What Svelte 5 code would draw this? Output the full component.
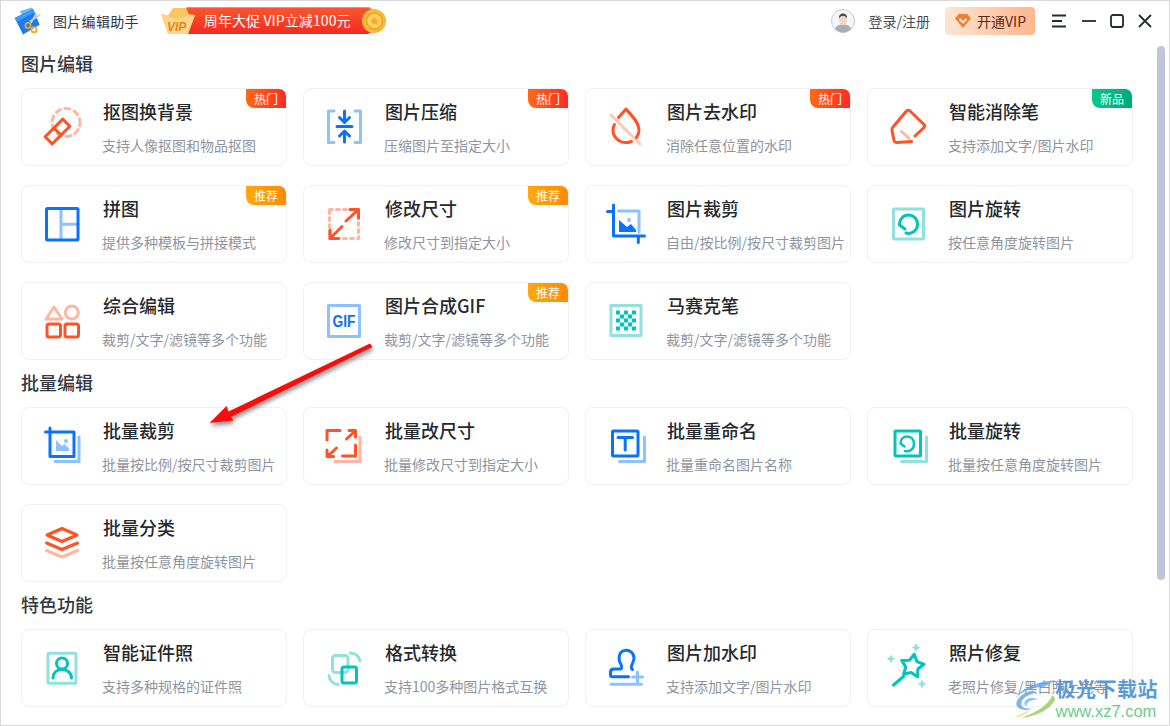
<script>
	const sections = [
		{
			name: '图片编辑',
			items: [
				{ icon: 'eraser', title: '抠图换背景', sub: '支持人像抠图和物品抠图', badge: 'hot' },
				{ icon: 'compress', title: '图片压缩', sub: '压缩图片至指定大小', badge: 'hot' },
				{ icon: 'drop', title: '图片去水印', sub: '消除任意位置的水印', badge: 'hot' },
				{ icon: 'pen', title: '智能消除笔', sub: '支持添加文字/图片水印', badge: 'new' },
				{ icon: 'grid', title: '拼图', sub: '提供多种模板与拼接模式', badge: 'rec' },
				{ icon: 'resize', title: '修改尺寸', sub: '修改尺寸到指定大小', badge: 'rec' },
				{ icon: 'crop', title: '图片裁剪', sub: '自由/按比例/按尺寸裁剪图片' },
				{ icon: 'rotate', title: '图片旋转', sub: '按任意角度旋转图片' },
				{ icon: 'shapes', title: '综合编辑', sub: '裁剪/文字/滤镜等多个功能' },
				{ icon: 'gif', title: '图片合成GIF', sub: '裁剪/文字/滤镜等多个功能', badge: 'rec' },
				{ icon: 'mosaic', title: '马赛克笔', sub: '裁剪/文字/滤镜等多个功能' }
			]
		},
		{
			name: '批量编辑',
			items: [
				{ icon: 'bcrop', title: '批量裁剪', sub: '批量按比例/按尺寸裁剪图片' },
				{ icon: 'bresize', title: '批量改尺寸', sub: '批量修改尺寸到指定大小' },
				{ icon: 'brename', title: '批量重命名', sub: '批量重命名图片名称' },
				{ icon: 'brotate', title: '批量旋转', sub: '批量按任意角度旋转图片' },
				{ icon: 'layers', title: '批量分类', sub: '批量按任意角度旋转图片' }
			]
		},
		{
			name: '特色功能',
			items: [
				{ icon: 'idphoto', title: '智能证件照', sub: '支持多种规格的证件照' },
				{ icon: 'convert', title: '格式转换', sub: '支持100多种图片格式互换' },
				{ icon: 'stamp', title: '图片加水印', sub: '支持添加文字/图片水印' },
				{ icon: 'wand', title: '照片修复', sub: '老照片修复/黑白照上色等' }
			]
		}
	];

	const badgeText = { hot: '热门', rec: '推荐', new: '新品' };

	const mosaicCells = [];
	for (let r = 0; r < 5; r++) {
		for (let c = 0; c < 5; c++) {
			if ((r + c) % 2 === 0) mosaicCells.push({ x: 10 + c * 4, y: 10.5 + r * 4 });
		}
	}
</script>

{#snippet icon(name)}
	<svg class="icon" viewBox="0 0 40 40" width="40" height="40">
		{#if name === 'eraser'}
			<circle class="ol" cx="24" cy="16.5" r="14" stroke-dasharray="5 4.5" stroke-dashoffset="2" />
			<g transform="rotate(-45 15.5 25.5)">
				<rect class="o" x="3" y="20.5" width="25" height="10" />
				<path class="o" d="M15.5 20.5v10" />
			</g>
		{:else if name === 'compress'}
			<path class="bl" d="M10 5H4.5v31.5H10M31 5h5.5v31.5H31" />
			<path class="b" d="M13 20.5h15M20.5 5v11M15.5 11.5l5 5 5-5M20.5 36V25.5M15.5 30l5-5 5 5" />
		{:else if name === 'drop'}
			<path class="ol2" d="M5 9l29 29" />
			<path class="o" d="M12.5 11.5L20 3c4 5.5 13 12 13 21 0 3-1 5.5-2.5 7.5M25.5 35.5C16 39 7 33 7 24c0-2 .5-4 1.5-5.5" />
		{:else if name === 'pen'}
			<path class="o" d="M27 30l9-8.500q1.500-1.500 0-3L22 5q-2-1.500-3.500 0L5 21q-1.500 1.500-1 3.500l2 10q.5 2 2.500 1.900L23.500 35.500" />
			<path class="ol" d="M13.5 25.5l7.5 6.800" />
		{:else if name === 'grid'}
			<path class="bl" d="M19 5.500v31M19 21.300h17" />
			<rect class="b" x="4.500" y="5.500" width="31.500" height="31.500" rx="1" />
		{:else if name === 'resize'}
			<rect class="ol" x="5.500" y="6.500" width="29" height="29" stroke-dasharray="3 4" />
			<path class="o" d="M22 18L34.500 6.500M26 6.500h8.500V15M18 23.500L6 35.500M6 27v8.500h8.500" />
		{:else if name === 'crop'}
			<path class="bl" d="M12.500 8H33v21" />
			<path class="b" d="M1.500 8.500h6M7.500 2v31h31M32.300 33v6.500" />
			<path class="fb" d="M13 17l8 7 4-3 5 6v2H13z" />
			<circle class="fbl" cx="23" cy="17" r="2" />
		{:else if name === 'rotate'}
			<rect class="tl" x="5.500" y="6" width="30" height="30" rx="1" />
			<path class="t" d="M18 30c5 1.500 11.500-2 11.500-8.500S25 12 20.500 12c-5 0-9 4-9 9.500M11.500 22l5.500 4" />
		{:else if name === 'shapes'}
			<path class="ol" d="M12 7l8 12H4z" />
			<circle class="ol" cx="29.800" cy="12.500" r="6.500" />
			<rect class="o" x="5" y="24" width="13.500" height="13" rx="2" />
			<rect class="o" x="23" y="24" width="13.500" height="13" rx="2" />
		{:else if name === 'gif'}
			<rect class="bl" x="4.500" y="5.500" width="31" height="31" />
			<text class="gif" x="20" y="26.500" text-anchor="middle" textLength="23" lengthAdjust="spacingAndGlyphs">GIF</text>
		{:else if name === 'mosaic'}
			<rect class="tl" x="5" y="5.500" width="30" height="30" />
			{#each mosaicCells as cell}
				<rect class="ft" x={cell.x} y={cell.y} width="4" height="4" />
			{/each}
		{:else if name === 'bcrop'}
			<path class="bl" d="M37 12v24.500H13" />
			<path class="b" d="M3.500 7H32v24.500H8V3" />
			<path class="fbl" d="M14 15l6 6 2.500-2 4.500 4.500V26H14z" />
			<circle class="fbl" cx="24" cy="16" r="2" />
		{:else if name === 'bresize'}
			<path class="ol" d="M36 12v24.500H11" />
			<path class="o" d="M3 15V5.500h13M31.500 20v11H18.500M22.500 14L31 6M25 5.500h6.500V12M4 31L12.500 23M3 25v6.500h6.500" />
		{:else if name === 'brename'}
			<path class="bl" d="M38.500 12v24.500H13.500" />
			<rect class="b" x="6.500" y="6" width="25.500" height="25" rx="1" />
			<path class="b" d="M12 12.500h14.500M19.200 12.500V25" />
		{:else if name === 'brotate'}
			<path class="tl" d="M38.500 12v24.500H13.500" />
			<rect class="t" x="7" y="6" width="25.500" height="25" rx="1" />
			<path class="t thin" d="M17 26c4 1 9-1.500 9-7s-3.500-7.500-7-7.500c-4 0-6.500 3-6.500 7M12.500 18.500l4 3" />
		{:else if name === 'layers'}
			<path class="o" d="M20 6.500L35 13 20 19.500 5 13z" />
			<path class="o" d="M4.500 21L20 27.500 35.500 21" />
			<path class="ol" d="M4.500 28.500L20 35l15.500-6.500" />
		{:else if name === 'idphoto'}
			<rect class="tl" x="6" y="6.200" width="28" height="30" rx="1" />
			<circle class="t" cx="20" cy="16.500" r="5.500" />
			<path class="t" d="M11 31c0-5 3.500-8.500 9-8.500s9.500 3.500 9.500 8.500" />
		{:else if name === 'convert'}
			<rect class="tl" x="8.500" y="8.500" width="15.500" height="17" rx="3" />
			<rect class="t" x="18" y="20" width="14.500" height="16" rx="2" />
			<path class="tl" d="M26.500 6c5 .3 8.800 3.500 9.500 8M5 28.500c.5 5 4 8.500 9 9" />
		{:else if name === 'stamp'}
			<path class="b" d="M22.500 29.700H6.500c-1.300 0-2-.7-2-2V25c0-2 1.500-3 3.500-3h6c2 0 2-2 1-4.500C13.500 15 13 13.500 13 11.300 13 6 16 3.200 20 3.200s8 2.800 8 8.100c0 2.200-1 3.700-2 6.200-1 2.500-1 4.500.5 5" />
			<path class="bl" d="M5 37.300h30.500M31.500 25v10M26.500 30h10" />
		{:else if name === 'wand'}
			<path class="t" d="M26.300 7.200L28.900 14.500 36.100 17.300 29.900 22 29.500 29.800 23.100 25.400 15.600 27.300 17.800 19.900 13.600 13.400 21.400 13.200z" />
			<path class="t" d="M15.500 29.500L5.500 38" />
			<path class="ftl" d="M28 -4l1.500 3 3 1.500-3 1.500-1.500 3-1.500-3-3-1.500 3-1.500zM3 7.500l1.500 2.800 2.800 1.500-2.800 1.500L3 16.200l-1.500-2.900L-1.300 11.800l2.800-1.500zM34 32.500l1.500 3 2.800 1.500-2.800 1.500L34 41.500l-1.500-3-2.800-1.500 2.800-1.500z" />
		{/if}
	</svg>
{/snippet}

<div class="window">
	<header class="titlebar">
		<svg class="logo" viewBox="0 0 30 30" width="30" height="30">
			<path d="M8 5L20 1.500l5 8.500-13 5z" fill="#6cc0f8" />
			<path d="M2.700 12L21 3l6.700 15.800L11 28.500z" fill="#1a7cf0" />
			<path d="M2.700 12L21 3l1.500 3.500L5 15.500z" fill="#3f9bf5" />
			<path d="M17.700 15.500L28.300 8.800M19 17L24.300 7.200" stroke="#c9ccd4" stroke-width="1.600" fill="none" />
			<circle cx="16" cy="19.500" r="2.600" fill="none" stroke="#f5a623" stroke-width="1.800" />
			<circle cx="22" cy="23.800" r="2.600" fill="none" stroke="#f5a623" stroke-width="1.800" />
		</svg>
		<span class="appname">图片编辑助手</span>

		<div class="promo">
			<span class="promo-pill">周年大促 VIP立减100元</span>
			<svg class="ingot" viewBox="0 0 34 28" width="34" height="28">
				<path d="M0 7l7 1.500L12 1h13l3 6.500L34 8l-7 19H7z" fill="#fbc65f" />
				<path d="M0 7l7 1.500c4 4 15 4 21-1L34 8l-7 19H7z" fill="#fcd588" />
				<text x="6" y="23.500" class="vip-mark">VIP</text>
			</svg>
			<svg class="coin" viewBox="0 0 26 26" width="26" height="26">
				<circle cx="13" cy="13" r="12" fill="#f6b93b" />
				<circle cx="13.500" cy="13" r="8" fill="#fbd15f" stroke="#eea21d" stroke-width="1.500" />
				<path d="M13.500 8.500l1.500 3 3 .4-2.200 2.100.6 3-2.900-1.500-2.900 1.500.6-3-2.200-2.100 3-.4z" fill="#f3ad2c" />
			</svg>
		</div>

		<div class="account">
			<svg class="avatar" viewBox="0 0 24 24" width="24" height="24">
				<circle cx="12" cy="12" r="11.500" fill="#f5f6f8" stroke="#c4c8ce" />
				<path d="M4 20c1-3.500 4-4.500 8-4.500s7 1 8 4.500a11 11 0 0 1-16 0z" fill="#a9afb8" />
				<ellipse cx="12" cy="10.500" rx="4" ry="5.500" fill="#f2d6c4" />
				<path d="M8 9.500C7.500 6 9.500 4.500 12 4.500s4.500 1.500 4 5c-1-2-2.500-2.500-4-2.500s-3 .5-4 2.500z" fill="#4a4f57" />
			</svg>
			<span class="login">登录/注册</span>
		</div>

		<div class="vip-btn">
			<svg viewBox="0 0 18 16" width="18" height="16">
				<path d="M4.500 1h9L17 5.500 9 15 1 5.500z" fill="#e5843a" />
				<path d="M5.500 6l3.500 3.500L12.500 6" fill="none" stroke="#fde6d2" stroke-width="1.800" />
			</svg>
			<span>开通VIP</span>
		</div>

		<div class="controls">
			<svg class="menu-icon" viewBox="0 0 14 14" width="14" height="14">
				<path d="M0 1.500h14M0 7h10M0 12.500h14" />
			</svg>
			<svg viewBox="0 0 14 14" width="14" height="14">
				<path d="M0 7h14" />
			</svg>
			<svg viewBox="0 0 14 14" width="14" height="14">
				<rect x="1" y="1" width="12" height="12" rx="2" />
			</svg>
			<svg viewBox="0 0 14 14" width="14" height="14">
				<path d="M1 1l12 12M13 1L1 13" />
			</svg>
		</div>
	</header>

	<div class="body">
		<main class="content">
			{#each sections as section}
				<h2>{section.name}</h2>
				<div class="grid">
					{#each section.items as item}
						<div class="card">
							{@render icon(item.icon)}
							<div class="text">
								<div class="title">{item.title}</div>
								<div class="sub">{item.sub}</div>
							</div>
							{#if item.badge}
								<span class="badge {item.badge}">{badgeText[item.badge]}</span>
							{/if}
						</div>
					{/each}
				</div>
			{/each}
		</main>
		<div class="rail"><div class="thumb"></div></div>
	</div>

	<!-- red arrow annotation laid over the screenshot -->
	<svg class="overlay" viewBox="0 0 1170 726" width="1170" height="726">
		<defs>
			<filter id="arrowShadow" x="-10%" y="-10%" width="120%" height="130%">
				<feDropShadow dx="1" dy="3" stdDeviation="2" flood-color="#000" flood-opacity="0.45" />
			</filter>
		</defs>
		<path
			d="M370 343.500L372.500 347 231 417 233.500 420.500 209.500 423 226.500 406 228.500 411.500z"
			fill="#f80e0e"
			filter="url(#arrowShadow)"
		/>
	</svg>

	<div class="watermark">
		<svg viewBox="0 0 48 42" width="45" height="40">
			<path d="M47 1C30 2 12 8 3 22c5-7 20-14 33-14 4-3 8-5 11-7z" fill="#5aa5e6" opacity="0.8" />
			<path d="M24 12C12 14 4 22 6 28c2 5 10 6 16 3-6 1-11-1-11-5 0-5 7-10 15-12z" fill="#6aa8e4" opacity="0.85" />
			<path d="M28 22c-2-3-9-3-12 0s-2 6 1 6c-1-3 5-7 11-6z" fill="#7ab6e8" opacity="0.8" />
			<path d="M44 17c-4 10-16 18-33 24 14-1 30-8 36-19 0-2-1-4-3-5z" fill="#9ccc65" opacity="0.85" />
			<path d="M4 41c6-1 12-4 17-8-5 2-12 4-17 8z" fill="#f0e26a" opacity="0.85" />
		</svg>
		<div class="wm-text">
			<span class="wm-cn">极光下载站</span>
			<span class="wm-url">www.xz7.com</span>
		</div>
	</div>
</div>

<style>
	:global(body) {
		margin: 0;
		background: #fff;
	}
	.window {
		position: relative;
		box-sizing: border-box;
		width: 1170px;
		height: 726px;
		border: 1px solid #d9d9d9;
		background: #fff;
		overflow: hidden;
		display: flex;
		flex-direction: column;
		font-family: 'Noto Sans CJK SC', 'Noto Sans', sans-serif;
		color: #222;
	}

	.titlebar {
		flex: none;
		height: 40px;
		display: flex;
		align-items: center;
		padding-left: 11px;
	}
	.logo {
		flex: none;
	}
	.appname {
		margin-left: 11px;
		font-size: 14px;
		letter-spacing: 0.3px;
		color: #33383f;
		white-space: nowrap;
	}
	.promo {
		position: relative;
		margin-left: 23px;
		width: 224px;
		height: 28px;
	}
	.promo-pill {
		position: absolute;
		left: 21px;
		top: 0;
		width: 190px;
		height: 27px;
		box-sizing: border-box;
		padding-left: 21px;
		line-height: 27px;
		font-size: 14px;
		letter-spacing: 0.1px;
		color: #fff;
		border-radius: 6px;
		background: linear-gradient(180deg, #f9572f, #f52a20);
		box-shadow: inset 0 1px 0 #f98e58;
		white-space: nowrap;
	}
	.ingot {
		position: absolute;
		left: -1px;
		top: 0;
	}
	.vip-mark {
		font-family: 'Liberation Sans', sans-serif;
		font-size: 12px;
		font-weight: 700;
		font-style: italic;
		fill: #d9891c;
	}
	.coin {
		position: absolute;
		left: 199px;
		top: 1px;
	}
	.account {
		margin-left: auto;
		display: flex;
		align-items: center;
		gap: 14px;
	}
	.login {
		font-size: 14px;
		color: #4a4f57;
		white-space: nowrap;
	}
	.vip-btn {
		margin-left: 15px;
		width: 90px;
		height: 28px;
		box-sizing: border-box;
		padding-left: 9px;
		display: flex;
		align-items: center;
		gap: 5px;
		border-radius: 4px;
		background: linear-gradient(90deg, #fde5d2, #ffb68f);
		font-size: 14px;
		color: #5b2a12;
		white-space: nowrap;
	}
	.controls {
		margin-left: 17px;
		margin-right: 17px;
		display: flex;
		gap: 14px;
	}
	.controls svg {
		display: block;
		fill: none;
		stroke: #262b33;
		stroke-width: 1.8;
	}
	.controls .menu-icon {
		margin-right: 2px;
	}

	.body {
		flex: 1;
		min-height: 0;
		display: flex;
	}
	.content {
		flex: 1;
		min-width: 0;
		overflow: hidden;
		padding: 12px 0 0 20px;
	}
	h2 {
		margin: 12px 0 11px;
		height: 24px;
		line-height: 20px;
		font-size: 18px;
		font-weight: 500;
		color: #33383f;
	}
	.content h2:first-child {
		margin-top: 0;
	}
	.grid {
		display: grid;
		grid-template-columns: repeat(4, 266px);
		gap: 19px 16px;
	}
	.card {
		position: relative;
		box-sizing: border-box;
		height: 78px;
		display: flex;
		border: 1px solid #eef0f3;
		border-radius: 8px;
		background: #fff;
		padding: 17px 0 0 20px;
	}
	.text {
		margin-left: 21px;
		margin-top: -5px;
		white-space: nowrap;
	}
	.title {
		height: 24px;
		line-height: 20px;
		font-size: 18px;
		font-weight: 500;
		color: #26282c;
	}
	.sub {
		margin-top: 10px;
		margin-left: -1px;
		height: 20px;
		line-height: 20px;
		font-size: 14px;
		color: #8e94a0;
	}
	.badge {
		position: absolute;
		top: 0;
		right: 0;
		width: 40px;
		height: 19px;
		line-height: 19px;
		text-align: center;
		font-size: 12px;
		color: #fff;
		border-radius: 0 7px 0 8px;
	}
	.badge.hot {
		background: linear-gradient(90deg, #ff6a14, #ff2c22);
	}
	.badge.rec {
		background: linear-gradient(90deg, #ffa80f, #ff8a06);
	}
	.badge.new {
		background: linear-gradient(90deg, #0ac78a, #00a97a);
	}

	.icon {
		flex: none;
		display: block;
		overflow: visible;
		fill: none;
		stroke-width: 3;
		stroke-linecap: round;
		stroke-linejoin: round;
	}
	.o {
		stroke: #ff5326;
	}
	.ol {
		stroke: #ffb6a3;
	}
	.ol2 {
		stroke: #ffc9b8;
	}
	.b {
		stroke: #0b72fb;
	}
	.bl {
		stroke: #8cc2ff;
	}
	.t {
		stroke: #01c4bf;
	}
	.tl {
		stroke: #92e1dd;
	}
	.thin {
		stroke-width: 2.5;
	}
	.fb {
		fill: #0b72fb;
	}
	.fbl {
		fill: #8cc2ff;
	}
	.ft {
		fill: #01c4bf;
	}
	.ftl {
		fill: #92e1dd;
	}
	.gif {
		font-family: 'Liberation Sans', sans-serif;
		font-size: 16px;
		font-weight: 700;
		fill: #0b72fb;
	}

	.rail {
		flex: none;
		width: 12px;
		padding-top: 5px;
	}
	.thumb {
		width: 8px;
		height: 534px;
		border-radius: 4px;
		background: #bfc6d9;
	}

	.overlay {
		position: absolute;
		left: -1px;
		top: -1px;
		pointer-events: none;
	}
	.watermark {
		position: absolute;
		right: 11px;
		bottom: 5px;
		display: flex;
		align-items: center;
		pointer-events: none;
	}
	.wm-text {
		display: flex;
		flex-direction: column;
	}
	.wm-cn {
		font-size: 20px;
		font-weight: 700;
		line-height: 24px;
		color: #5b9bd5;
		letter-spacing: 0.5px;
		white-space: nowrap;
	}
	.wm-url {
		font-family: 'Liberation Sans', sans-serif;
		font-size: 16.5px;
		line-height: 18px;
		margin-top: 1px;
		color: #6dcb8c;
		white-space: nowrap;
	}
</style>
